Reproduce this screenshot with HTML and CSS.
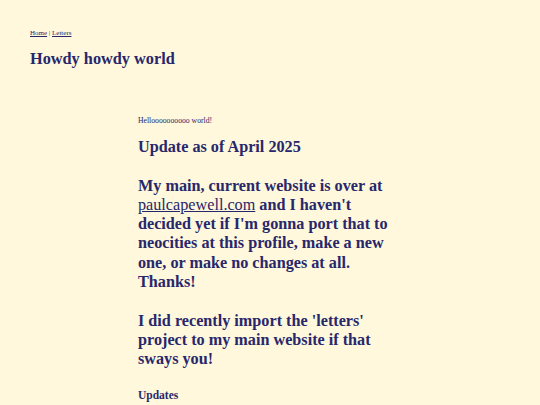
FILE: index.html
```html
<!DOCTYPE html>
<html>
<head>
<meta charset="utf-8">
<link rel="stylesheet" href="styles.css">
</head>
<body>
<div class="page">
  <nav class="nav"><a href="#">Home</a> | <a href="#">Letters</a></nav>
  <h1 class="title">Howdy howdy world</h1>
  <main class="content">
    <p class="hello">Helloooooooooo world!</p>
    <h2 class="big">Update as of April 2025<br><br>My main, current website is over at <a href="#" class="plain">paulcapewell.com</a> and I haven't decided yet if I'm gonna port that to neocities at this profile, make a new one, or make no changes at all. Thanks!<br><br>I did recently import the 'letters' project to my main website if that sways you!</h2>
    <h3 class="sub">Updates</h3>
  </main>
</div>
</body>
</html>
```
FILE: styles.css
```css
html, body {
  margin: 0;
  padding: 0;
  background: #fff8dc;
}
body {
  font-family: "Liberation Serif", "Times New Roman", serif;
  color: #28276b;
}
.page {
  padding: 29px 30px 0 30px;
}
.nav {
  font-size: 7px;
  line-height: 8px;
}
.nav a {
  color: #28276b;
}
.title {
  margin: 13px 0 0 0;
  font-size: 16.3px;
  line-height: 18px;
}
.content {
  margin: 48px 0 0 108px;
  width: 264px;
}
.hello {
  margin: 0;
  font-size: 7.7px;
  line-height: 10px;
}
.big {
  margin: 12px 0 0 0;
  font-size: 16.2px;
  line-height: 19.3px;
}
.plain {
  font-weight: normal;
  color: #28276b;
}
.sub {
  margin: 18px 0 0 0;
  font-size: 11.5px;
  line-height: 14px;
}
```
